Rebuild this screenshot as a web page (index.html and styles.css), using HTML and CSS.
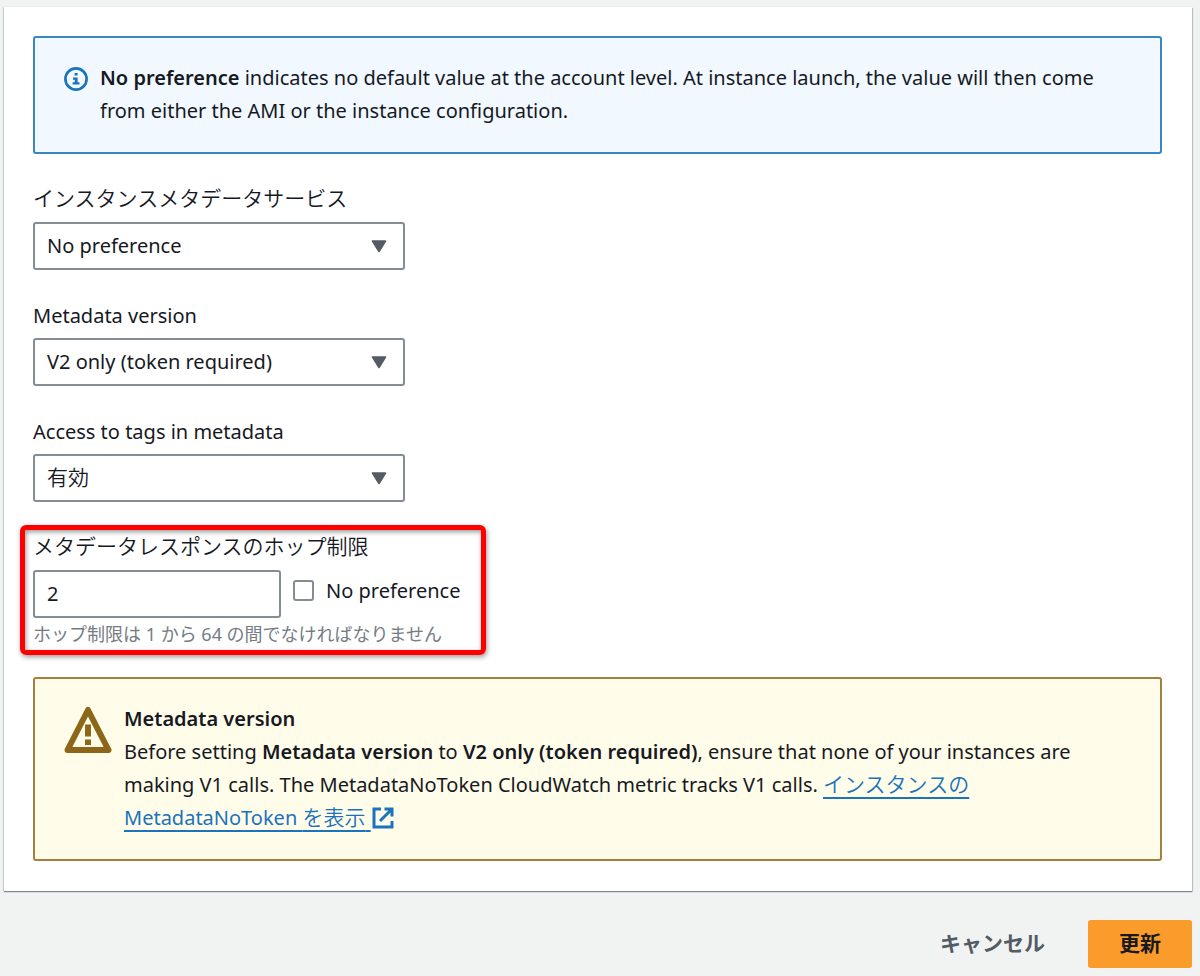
FILE: index.html
```
<!DOCTYPE html>
<html lang="ja">
<head>
<meta charset="utf-8">
<meta name="viewport" content="width=device-width, initial-scale=1">
<title>Metadata defaults</title>
<link rel="stylesheet" href="styles.css">
</head>
<body>
<form class="page">
  <main class="panel">
    <section class="alert alert-info">
      <svg class="icon-info" viewBox="0 0 24 24" aria-hidden="true">
        <circle cx="12" cy="12" r="10.6" fill="none" stroke="currentColor" stroke-width="2.6"/>
        <path d="M10.6 6h3v2.6h-3zM9 10.4h4.6v4.8h1.9v2.3H8.6v-2.3h2.1v-2.5H9z" fill="currentColor"/>
      </svg>
      <p><strong>No preference</strong> indicates no default value at the account level. At instance launch, the value will then come from either the AMI or the instance configuration.</p>
    </section>

    <div class="field">
      <label class="label label-ja" for="service">インスタンスメタデータサービス</label>
      <div class="select">
        <select id="service"><option>No preference</option></select>
        <svg class="caret" viewBox="0 0 16 13" aria-hidden="true"><path d="M1.5 1h13L8 11.5z" fill="currentColor" stroke="currentColor" stroke-width="1.6" stroke-linejoin="round"/></svg>
      </div>
    </div>

    <div class="field">
      <label class="label" for="version">Metadata version</label>
      <div class="select">
        <select id="version"><option>V2 only (token required)</option></select>
        <svg class="caret" viewBox="0 0 16 13" aria-hidden="true"><path d="M1.5 1h13L8 11.5z" fill="currentColor" stroke="currentColor" stroke-width="1.6" stroke-linejoin="round"/></svg>
      </div>
    </div>

    <div class="field">
      <label class="label" for="tags">Access to tags in metadata</label>
      <div class="select">
        <select id="tags" class="select-ja"><option>有効</option></select>
        <svg class="caret" viewBox="0 0 16 13" aria-hidden="true"><path d="M1.5 1h13L8 11.5z" fill="currentColor" stroke="currentColor" stroke-width="1.6" stroke-linejoin="round"/></svg>
      </div>
    </div>

    <div class="field field-marked">
      <label class="label label-ja" for="hops">メタデータレスポンスのホップ制限</label>
      <div class="hop-row">
        <input class="text-input" id="hops" type="text" inputmode="numeric" value="2" aria-describedby="hops-hint">
        <label class="check"><input type="checkbox">No preference</label>
      </div>
      <p class="hint" id="hops-hint">ホップ制限は 1 から 64 の間でなければなりません</p>
    </div>

    <section class="alert alert-warning">
      <svg class="icon-warning" viewBox="0 0 48 48" aria-hidden="true">
        <path d="M24 4 44.500 44h-41z" fill="none" stroke="currentColor" stroke-width="6" stroke-linejoin="round"/>
        <path d="M21 18.500h6v12h-6zM21 33.500h6v5.500h-6z" fill="currentColor"/>
      </svg>
      <div>
        <h2>Metadata version</h2>
        <p>Before setting <strong>Metadata version</strong> to <strong>V2 only (token required)</strong>, ensure that none of your instances are making V1 calls. The MetadataNoToken CloudWatch metric tracks V1 calls. <a href="#metrics"><span class="link-text"><span class="ja">インスタンスの</span> MetadataNoToken <span class="ja">を表示</span>&nbsp;</span><svg class="icon-external" viewBox="0 0 22 22" aria-hidden="true"><path d="M9 2H2v18h18v-6M12.500 2H20v7.500M19.500 2.500 8 14" fill="none" stroke="currentColor" stroke-width="3"/></svg></a></p>
      </div>
    </section>
  </main>

  <footer class="actions">
    <button class="btn btn-link" type="button">キャンセル</button>
    <button class="btn btn-primary" type="submit">更新</button>
  </footer>
</form>
</body>
</html>
```
FILE: styles.css
```
*,
*::after {
  box-sizing: border-box;
}

body {
  margin: 0;
  background: #f1f3f3;
  color: #16191f;
  font: 20px/33px "Noto Sans", "Noto Sans CJK JP", sans-serif;
}

h2,
p {
  margin: 0;
  font-size: inherit;
}

h2,
strong {
  font-weight: 600;
}

.ja {
  font-family: "Noto Sans CJK JP", sans-serif;
  font-size: 21px;
  font-weight: 350;
  line-height: 1;
}

.page {
  padding: 7px 8px 8px 4px;
}

.panel {
  display: flex;
  flex-direction: column;
  gap: 31px;
  padding: 29px 30px 30px 29px;
  background: #fff;
  box-shadow: 0 1px 1px #7d8998, 1px 1px 1px #c5cccc, -1px 0 1px #d5dbdb;
}

.alert {
  display: flex;
  gap: 12px;
  padding: 23px 28px 25px 29px;
  border: 2px solid;
  border-radius: 3px;
}

.alert-info {
  border-color: #3a86c0;
  background: #f1f8ff;
}

.alert-warning {
  border-color: #a4803c;
  background: #fffce9;
}

.icon-info {
  flex: none;
  width: 24px;
  height: 24px;
  margin-top: 6px;
  color: #1a73bb;
}

.icon-warning {
  flex: none;
  width: 48px;
  height: 48px;
  margin-top: 4px;
  color: #8d6719;
}

.field {
  position: relative;
  display: flex;
  flex-direction: column;
}

.label {
  align-self: flex-start;
  margin-bottom: 7px;
  line-height: 30px;
}

.label-ja {
  margin-bottom: 12px;
  font-family: "Noto Sans CJK JP", sans-serif;
  font-size: 21px;
  font-weight: 350;
  line-height: 25px;
}

.select {
  display: grid;
  align-items: center;
  width: 100%;
  max-width: 372px;
}

.select select,
.text-input {
  height: 48px;
  margin: 0;
  padding: 0 12px 2px;
  border: 2px solid #858c95;
  border-radius: 3px;
  background: #fff;
  color: inherit;
  font-family: "Noto Sans", sans-serif;
  font-size: 20px;
}

.select select {
  grid-area: 1 / 1;
  appearance: none;
}

.select .select-ja {
  padding-bottom: 5px;
  font-family: "Noto Sans CJK JP", sans-serif;
  font-size: 21px;
  font-weight: 350;
}

.caret {
  grid-area: 1 / 1;
  justify-self: end;
  width: 16px;
  height: 13px;
  margin-right: 18px;
  color: #545b64;
  pointer-events: none;
}

.field-marked::after {
  content: "";
  position: absolute;
  top: -8px;
  left: -13px;
  width: 466px;
  height: 130px;
  border: 5px solid #fe0000;
  border-radius: 6px;
  box-shadow: 1px 2px 5px #999, inset 1px 2px 5px #999;
  pointer-events: none;
}

.hop-row {
  display: flex;
  gap: 12px;
}

.text-input {
  width: 248px;
}

.check {
  display: flex;
  align-items: center;
  gap: 12px;
  height: 40px;
}

.check input {
  width: 21px;
  height: 21px;
  margin: 0;
  appearance: none;
  border: 2px solid #858c95;
  border-radius: 3px;
  background: #fff;
}

.hint {
  margin-top: 4px;
  color: #757c84;
  font-size: 18px;
  line-height: 24px;
}

a {
  color: #1a73bb;
  text-decoration: none;
}

.link-text {
  text-decoration: underline 2px;
  text-underline-offset: 5px;
  text-decoration-skip-ink: none;
}

.icon-external {
  width: 22px;
  height: 22px;
  margin-left: 1px;
  vertical-align: -4px;
}

.actions {
  display: flex;
  justify-content: flex-end;
  gap: 12px;
  padding-top: 29px;
}

.btn {
  height: 48px;
  padding: 0 31px 4px;
  border: 0;
  border-radius: 3px;
  font: 700 21px/32px "Noto Sans CJK JP", sans-serif;
}

.btn-link {
  background: none;
  color: #545b64;
}

.btn-primary {
  background: #fb9b2c;
  color: #16191f;
}
```
